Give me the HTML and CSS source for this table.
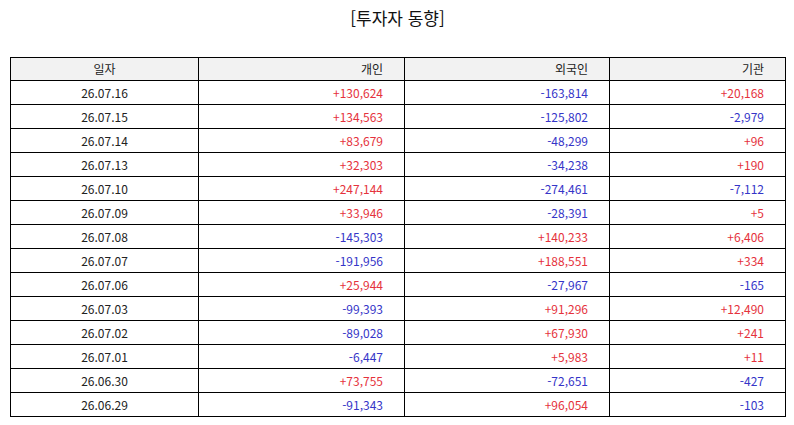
FILE: index.html
```html
<!DOCTYPE html>
<html lang="ko">
<head>
<meta charset="utf-8">
<link rel="stylesheet" href="styles.css">
</head>
<body>
<div class="page">
  <h1 class="title">[투자자 동향]</h1>
  <table class="grid">
    <colgroup>
      <col class="c1"><col class="c2"><col class="c3"><col class="c4">
    </colgroup>
    <thead>
      <tr><th class="center">일자</th><th>개인</th><th>외국인</th><th>기관</th></tr>
    </thead>
    <tbody>
      <tr><td class="center">26.07.16</td><td class="up">+130,624</td><td class="down">-163,814</td><td class="up">+20,168</td></tr>
      <tr><td class="center">26.07.15</td><td class="up">+134,563</td><td class="down">-125,802</td><td class="down">-2,979</td></tr>
      <tr><td class="center">26.07.14</td><td class="up">+83,679</td><td class="down">-48,299</td><td class="up">+96</td></tr>
      <tr><td class="center">26.07.13</td><td class="up">+32,303</td><td class="down">-34,238</td><td class="up">+190</td></tr>
      <tr><td class="center">26.07.10</td><td class="up">+247,144</td><td class="down">-274,461</td><td class="down">-7,112</td></tr>
      <tr><td class="center">26.07.09</td><td class="up">+33,946</td><td class="down">-28,391</td><td class="up">+5</td></tr>
      <tr><td class="center">26.07.08</td><td class="down">-145,303</td><td class="up">+140,233</td><td class="up">+6,406</td></tr>
      <tr><td class="center">26.07.07</td><td class="down">-191,956</td><td class="up">+188,551</td><td class="up">+334</td></tr>
      <tr><td class="center">26.07.06</td><td class="up">+25,944</td><td class="down">-27,967</td><td class="down">-165</td></tr>
      <tr><td class="center">26.07.03</td><td class="down">-99,393</td><td class="up">+91,296</td><td class="up">+12,490</td></tr>
      <tr><td class="center">26.07.02</td><td class="down">-89,028</td><td class="up">+67,930</td><td class="up">+241</td></tr>
      <tr><td class="center">26.07.01</td><td class="down">-6,447</td><td class="up">+5,983</td><td class="up">+11</td></tr>
      <tr><td class="center">26.06.30</td><td class="up">+73,755</td><td class="down">-72,651</td><td class="down">-427</td></tr>
      <tr><td class="center">26.06.29</td><td class="down">-91,343</td><td class="up">+96,054</td><td class="down">-103</td></tr>
    </tbody>
  </table>
</div>
</body>
</html>
```
FILE: styles.css
```css
html, body {
  margin: 0;
  padding: 0;
  background: #ffffff;
}
.page {
  padding: 0 9px 0 10px;
  font-family: "Noto Sans CJK KR", "Noto Sans", sans-serif;
  color: #222222;
}
.title {
  margin: 0;
  padding-top: 6px;
  height: 57px;
  box-sizing: border-box;
  text-align: center;
  font-size: 17px;
  font-weight: normal;
  line-height: 24px;
  color: #111111;
}
.grid {
  width: 775px;
  border-collapse: collapse;
  table-layout: fixed;
  font-size: 12px;
}
.c1 { width: 188px; }
.c2 { width: 206px; }
.c3 { width: 205px; }
.c4 { width: 176px; }
.grid th, .grid td {
  border: 1px solid #000000;
  height: 23px;
  padding: 0 21px 0 4px;
  text-align: right;
  line-height: 23px;
  white-space: nowrap;
}
.grid th {
  height: 22px;
  line-height: 22px;
  background: #f2f2f2;
  font-weight: normal;
  color: #222222;
}
.grid .center {
  text-align: center;
  padding: 0;
}
.up { color: #e5323c; }
.down { color: #3535c8; }
```
